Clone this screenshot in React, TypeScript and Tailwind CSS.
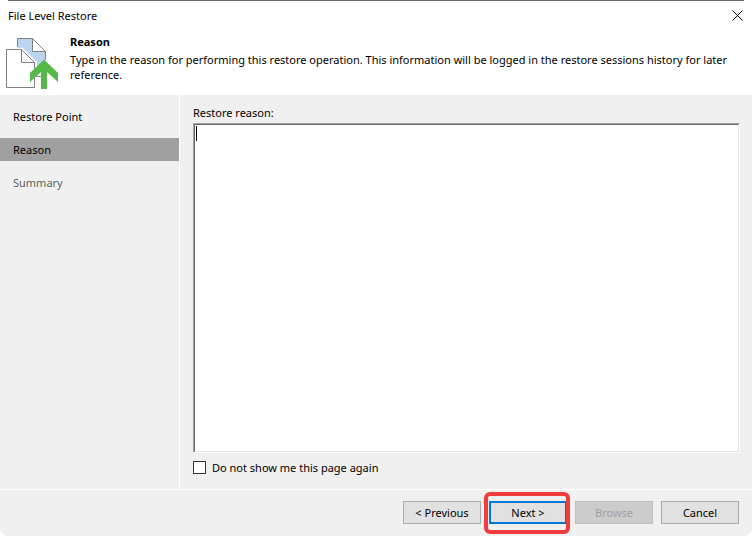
import React, { useState } from 'react';

const steps = [
  { label: 'Restore Point', style: 'text-black' },
  { label: 'Reason', style: 'bg-[#a0a0a0] text-black' },
  { label: 'Summary', style: 'text-[#606060]' },
];

const RestoreIcon = () => (
  <svg className="h-13 w-13 shrink-0" viewBox="0 0 52 52" fill="none" aria-hidden="true">
    {/* back page */}
    <path d="M11.5 10V.5H27L39.5 13.5V38.5H11.5Z" fill="#fff" />
    <path d="M12 1H26V14H39V30H31V24L17 10H12Z" fill="#bcd5ee" />
    <path d="M11.5 9V.5H26.5V13.5H39.5V22M30 38.5H36" stroke="#808080" />
    <path d="M27 1L39 13" stroke="#808080" />
    {/* front page */}
    <path d="M0 10H16L30 24V51H0Z" fill="#fff" />
    <path d="M15.5 11.5H.5V49.5H28.5V24.5H15.5ZL28.5 24.5" stroke="#808080" />
    {/* arrow */}
    <path d="M38 21.5L52 35V44L41 34V51H35V34L24 44V35Z" fill="#54b948" />
  </svg>
);

export default function App() {
  const [reason, setReason] = useState('');
  const [skipPage, setSkipPage] = useState(false);

  const button = 'h-[23px] w-[78px] border border-[#adadad] bg-[#e1e1e1] text-center';

  return (
    <div className="min-h-screen bg-white font-['Noto_Sans','Open_Sans',sans-serif] text-[11px] leading-[15px] text-black">
      <div className="flex min-h-screen flex-col overflow-hidden rounded-b-lg bg-[#f0f0f0]">
        <header className="bg-white">
          <div className="mx-2 h-px bg-[#6b6b6b]" />
          <div className="flex h-[29px] items-center justify-between pr-[9px] pl-2">
            <h1>File Level Restore</h1>
            <button type="button" aria-label="Close">
              <svg className="h-[11px] w-[11px]" viewBox="0 0 11 11" stroke="#000" aria-hidden="true">
                <path d="M.5 .5L10.5 10.5M10.5 .5L.5 10.5" />
              </svg>
            </button>
          </div>
          <div className="flex h-[65px] items-start gap-3 pr-2 pl-[6px]">
            <div className="pt-2">
              <RestoreIcon />
            </div>
            <div className="pt-1">
              <h2 className="mb-[3px] font-bold">Reason</h2>
              <p>
                Type in the reason for performing this restore operation. This information will be logged in the
                restore sessions history for later reference.
              </p>
            </div>
          </div>
        </header>

        <div className="flex flex-1">
          <nav className="w-[180px] shrink-0 border-r border-white pt-[10px]">
            <ul className="flex flex-col gap-[10px]">
              {steps.map((step) => (
                <li key={step.label} className={`flex h-[23px] items-center pl-[13px] ${step.style}`}>
                  {step.label}
                </li>
              ))}
            </ul>
          </nav>

          <main className="flex flex-1 flex-col pt-[10px] pr-3 pb-[14px] pl-[13px]">
            <label htmlFor="reason" className="mb-[3px]">Restore reason:</label>
            <div className="relative flex flex-1 border border-t-[#a0a0a0] border-r-white border-b-white border-l-[#a0a0a0]">
              <textarea
                id="reason"
                value={reason}
                onChange={(e) => setReason(e.target.value)}
                className="flex-1 resize-none border border-t-[#696969] border-r-[#e3e3e3] border-b-[#e3e3e3] border-l-[#696969] bg-white px-[2px] outline-none"
              />
              {/* text cursor */}
              {reason === '' && <span className="absolute top-[2px] left-[2px] h-[15px] w-px bg-black" />}
            </div>
            <label className="mt-[7px] flex items-center gap-[6px]">
              <input
                type="checkbox"
                checked={skipPage}
                onChange={(e) => setSkipPage(e.target.checked)}
                className="h-[13px] w-[13px] appearance-none border border-[#333333] bg-white checked:bg-[#0078d7]"
              />
              Do not show me this page again
            </label>
          </main>
        </div>

        <footer className="flex justify-end gap-2 border-t border-white pt-[11px] pr-[13px] pb-3">
          <button type="button" className={button}>&lt; Previous</button>
          <div className="relative">
            <button type="button" className="h-[23px] w-[78px] border-2 border-[#0078d7] bg-[#e1e1e1] text-center">
              Next &gt;
            </button>
            <div className="pointer-events-none absolute -top-[9px] -right-[3px] -bottom-[10px] -left-[5px] rounded-md border-4 border-[#f03c3c]" />
          </div>
          <button type="button" disabled className="h-[23px] w-[78px] border border-[#bfbfbf] bg-[#cccccc] text-center text-[#a0a0a0]">
            Browse
          </button>
          <button type="button" className={button}>Cancel</button>
        </footer>
      </div>
    </div>
  );
}
